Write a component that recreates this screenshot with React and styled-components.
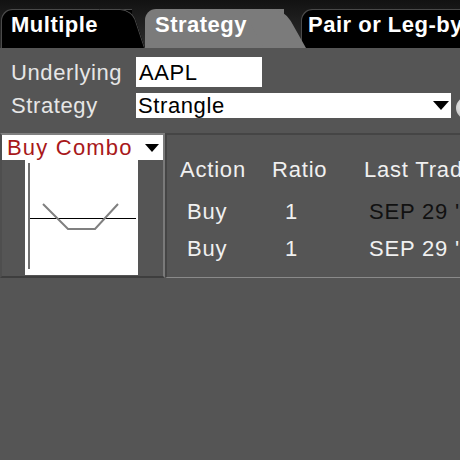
import React from 'react';
import styled, { createGlobalStyle } from 'styled-components';

const GlobalStyle = createGlobalStyle`
  html, body { margin: 0; padding: 0; background: #555; width: 460px; height: 460px; overflow: hidden; }
  body { font-family: "Liberation Sans", Arial, Helvetica, sans-serif; }
  * { box-sizing: border-box; }
`;

const Screen = styled.div`
  width: 460px;
  height: 460px;
  background: #555;
  overflow: hidden;
  display: flex;
  flex-direction: column;
`;

const TabBar = styled.div`
  flex: none;
  height: 48px;
  display: flex;
  align-items: flex-end;
  padding-left: 1px;
  background: linear-gradient(#121212, #2f2f2f);
  overflow: hidden;
`;

const Tab = styled.div`
  position: relative;
  flex: none;
  width: ${(p) => p.$w}px;
  height: 39px;
  margin-right: ${(p) => p.$mr || 0}px;
  padding-left: ${(p) => p.$pl}px;
  background: ${(p) => (p.$active ? '#7b7b7b' : '#000')};
  border-radius: 11px 0 0 0;
  box-shadow: ${(p) => (p.$active ? 'none' : 'inset 1px 1px 0 #4a4a4a')};
  z-index: ${(p) => (p.$active ? 2 : 1)};
  color: #fff;
  font-weight: bold;
  font-size: 22px;
  line-height: 32px;
  letter-spacing: 0.5px;
  white-space: nowrap;
  &::after {
    content: '';
    position: absolute;
    top: 0;
    bottom: 0;
    left: calc(100% - 20px);
    width: ${(p) => 20 + p.$s}px;
    background: inherit;
    box-shadow: ${(p) => (p.$active ? 'none' : 'inset 0 1px 0 #4a4a4a, inset -1px 0 0 #4a4a4a')};
    transform-origin: bottom left;
    transform: skewX(${(p) => (Math.atan(p.$s / 39) * 180) / Math.PI}deg);
    border-top-right-radius: 12px;
    z-index: -1;
  }
`;

const Form = styled.div`
  flex: none;
  display: flex;
  flex-direction: column;
  gap: 6px;
  padding: 9px 0 0 11px;
`;

const Row = styled.div`
  display: flex;
  align-items: baseline;
`;

const Label = styled.div`
  flex: none;
  width: 125px;
  color: #e6e6e6;
  font-size: 22px;
  letter-spacing: 0.6px;
  white-space: nowrap;
`;

const Field = styled.div`
  flex: none;
  display: flex;
  align-items: center;
  justify-content: space-between;
  width: ${(p) => p.$w}px;
  height: ${(p) => p.$h}px;
  line-height: ${(p) => p.$lh}px;
  padding: ${(p) => p.$pt}px 2px 0 ${(p) => p.$pl}px;
  background: #fff;
  color: #000;
  font-size: 22px;
  letter-spacing: 0.6px;
  white-space: nowrap;
`;

const DownArrow = styled.span`
  flex: none;
  width: 0;
  height: 0;
  border-left: ${(p) => p.$w / 2}px solid transparent;
  border-right: ${(p) => p.$w / 2}px solid transparent;
  border-top: ${(p) => p.$h}px solid #000;
`;

const InfoDot = styled.div`
  flex: none;
  align-self: flex-end;
  width: 22px;
  height: 22px;
  margin-left: 5px;
  border-radius: 50%;
  background: radial-gradient(circle at 40% 40%, #f2f2f2, #a9a9a9);
`;

const Panels = styled.div`
  flex: none;
  display: flex;
  height: 145px;
  margin-top: 14px;
`;

const ComboPanel = styled.div`
  flex: none;
  width: 165px;
  display: flex;
  flex-direction: column;
  border-top: 2px solid #808080;
  border-right: 2px solid #7a7a7a;
  border-bottom: 2px solid #3e3e3e;
  border-left: 2px solid #4e4e4e;
  background: #555;
`;

const ComboHeader = styled.div`
  flex: none;
  height: 25px;
  display: flex;
  align-items: center;
  justify-content: space-between;
  padding: 0 4px 0 5px;
  background: #fff;
  color: #a8181a;
  font-size: 22px;
  line-height: 25px;
  letter-spacing: 1.2px;
  white-space: nowrap;
`;

const ChartWrap = styled.div`
  flex: 1;
  display: flex;
  padding-left: 23px;
`;

const Chart = styled.svg`
  display: block;
  background: #fff;
`;

const LegsPanel = styled.div`
  flex: 1;
  min-width: 0;
  overflow: hidden;
  border-top: 2px solid #454545;
  border-left: 2px solid #454545;
  border-bottom: 1px solid #8a8a8a;
  padding: 16px 0 0 13px;
`;

const LegsTable = styled.div`
  display: grid;
  grid-template-columns: 92px 92px 1fr;
  grid-template-rows: 42px 37px 37px;
  font-size: 22px;
  line-height: 37px;
  letter-spacing: 0.8px;
  white-space: nowrap;
`;

const Cell = styled.div`
  padding-left: ${(p) => p.$indent || 0}px;
  color: ${(p) => p.$color || '#f0f0f0'};
  line-height: 37px;
`;

export default function App() {
  const legs = [
    { action: 'Buy', ratio: '1', date: "SEP 29 '17", dark: true },
    { action: 'Buy', ratio: '1', date: "SEP 29 '17", dark: false },
  ];
  return (
    <>
      <GlobalStyle />
      <Screen>
        <TabBar>
          <Tab $w={131} $mr={13} $pl={10} $s={13}>Multiple</Tab>
          <Tab $w={139} $mr={17} $pl={10} $s={22} $active>Strategy</Tab>
          <Tab $w={220} $pl={7} $s={0}>Pair or Leg-by-Leg</Tab>
        </TabBar>
        <Form>
          <Row>
            <Label>Underlying</Label>
            <Field $w={126} $h={30} $lh={30} $pt={2} $pl={3}>AAPL</Field>
          </Row>
          <Row>
            <Label>Strategy</Label>
            <Field $w={315} $h={25} $lh={25} $pt={0} $pl={2}>
              <span>Strangle</span>
              <DownArrow $w={16} $h={9} />
            </Field>
            <InfoDot />
          </Row>
        </Form>
        <Panels>
          <ComboPanel>
            <ComboHeader>
              <span>Buy Combo</span>
              <DownArrow $w={15} $h={8} />
            </ComboHeader>
            <ChartWrap>
              <Chart width="113" height="115" viewBox="0 0 113 115">
                <line x1="4" y1="3" x2="4" y2="109" stroke="#707070" strokeWidth="2" />
                <line x1="5" y1="58.5" x2="111" y2="58.5" stroke="#000" strokeWidth="1.2" />
                <polyline points="18,44 43,69 70,69 93,44" fill="none" stroke="#808080" strokeWidth="2" />
              </Chart>
            </ChartWrap>
          </ComboPanel>
          <LegsPanel>
            <LegsTable>
              <Cell>Action</Cell>
              <Cell>Ratio</Cell>
              <Cell>Last Trading Day</Cell>
              {legs.map((l, i) => (
                <React.Fragment key={i}>
                  <Cell $indent={7}>{l.action}</Cell>
                  <Cell $indent={13}>{l.ratio}</Cell>
                  <Cell $indent={5} $color={l.dark ? '#111' : '#f0f0f0'}>{l.date}</Cell>
                </React.Fragment>
              ))}
            </LegsTable>
          </LegsPanel>
        </Panels>
      </Screen>
    </>
  );
}
